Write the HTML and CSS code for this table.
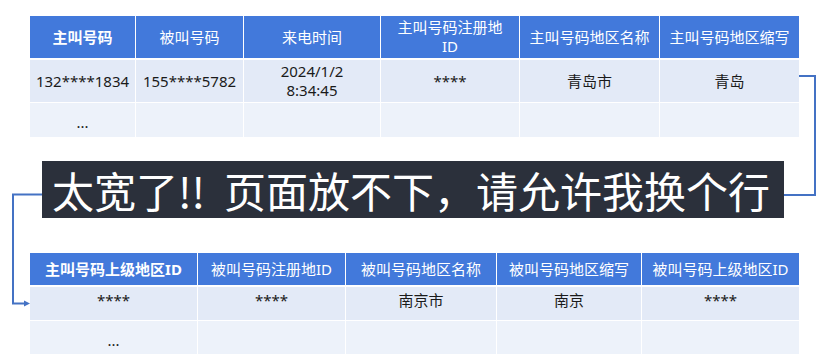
FILE: index.html
```html
<!DOCTYPE html>
<html lang="zh-CN">
<head>
<meta charset="utf-8">
<title>表格换行</title>
<link rel="stylesheet" href="styles.css">
</head>
<body>
<div class="page">
  <table class="grid grid-top">
    <colgroup>
      <col class="w106"><col class="w108"><col class="w137"><col class="w139"><col class="w140"><col class="w139">
    </colgroup>
    <thead>
      <tr>
        <th class="strong">主叫号码</th>
        <th>被叫号码</th>
        <th>来电时间</th>
        <th>主叫号码注册地<br>ID</th>
        <th>主叫号码地区名称</th>
        <th class="last">主叫号码地区缩写</th>
      </tr>
    </thead>
    <tbody>
      <tr class="row-a">
        <td>132****1834</td>
        <td>155****5782</td>
        <td>2024/1/2<br>8:34:45</td>
        <td>****</td>
        <td>青岛市</td>
        <td class="last">青岛</td>
      </tr>
      <tr class="row-b">
        <td>...</td>
        <td></td>
        <td></td>
        <td></td>
        <td></td>
        <td class="last"></td>
      </tr>
    </tbody>
  </table>

  <div class="banner">太宽了!!&nbsp; 页面放不下，请允许我换个行</div>

  <table class="grid grid-bottom">
    <colgroup>
      <col class="w168"><col class="w148"><col class="w151"><col class="w145"><col class="w157">
    </colgroup>
    <thead>
      <tr>
        <th class="strong">主叫号码上级地区ID</th>
        <th>被叫号码注册地ID</th>
        <th>被叫号码地区名称</th>
        <th>被叫号码地区缩写</th>
        <th class="last">被叫号码上级地区ID</th>
      </tr>
    </thead>
    <tbody>
      <tr class="row-c">
        <td>****</td>
        <td>****</td>
        <td>南京市</td>
        <td>南京</td>
        <td class="last">****</td>
      </tr>
      <tr class="row-d">
        <td>...</td>
        <td></td>
        <td></td>
        <td></td>
        <td class="last"></td>
      </tr>
    </tbody>
  </table>

  <svg class="connectors" width="829" height="361" viewBox="0 0 829 361" aria-hidden="true">
    <polyline points="799,76 815,76 815,195 784,195" fill="none" stroke="#4472c4" stroke-width="2"/>
    <polyline points="42,194.5 13,194.5 13,303.5 25,303.5" fill="none" stroke="#4472c4" stroke-width="2"/>
    <polygon points="24,300.5 30,303.5 24,306.5" fill="#4472c4"/>
  </svg>
</div>
</body>
</html>
```

FILE: styles.css
```css
html, body {
  margin: 0;
  padding: 0;
  background: #ffffff;
}

.page {
  position: relative;
  width: 829px;
  height: 361px;
  box-sizing: border-box;
  padding: 16px 30px 0 30px;
  font-family: "Noto Sans", "Noto Sans CJK SC", sans-serif;
  color: #1a1a1a;
}

.grid {
  border-collapse: separate;
  border-spacing: 0;
  table-layout: fixed;
  width: 769px;
  font-size: 15px;
  text-align: center;
}

.w106 { width: 106px; }
.w108 { width: 108px; }
.w137 { width: 137px; }
.w139 { width: 139px; }
.w140 { width: 140px; }
.w168 { width: 168px; }
.w148 { width: 148px; }
.w151 { width: 151px; }
.w145 { width: 145px; }
.w157 { width: 157px; }

.grid th,
.grid td {
  box-sizing: border-box;
  padding: 0 1px;
  border-right: 1px solid #ffffff;
  vertical-align: middle;
  white-space: nowrap;
}

.grid th.last,
.grid td.last {
  border-right: 0;
}

.grid th {
  background: #4279db;
  color: #ffffff;
  font-weight: 400;
  line-height: 19px;
  border-bottom: 2px solid #ffffff;
}

.grid th.strong {
  font-weight: 700;
}

.grid td {
  line-height: 19px;
}

.grid-top th { height: 44px; }
.grid-top .row-a td { height: 43px; background: #e3eaf7; border-bottom: 1px solid #ffffff; }
.grid-top .row-b td { height: 34px; background: #edf2fa; padding-top: 4px; }

.grid-bottom th { height: 34px; }
.grid-bottom .row-c td { height: 34px; background: #e3eaf7; border-bottom: 1px solid #ffffff; padding-bottom: 6px; }
.grid-bottom .row-d td { height: 33px; background: #edf2fa; padding-top: 6px; }

.banner {
  box-sizing: border-box;
  width: 742px;
  height: 57px;
  margin: 24px 0 35px 12px;
  padding: 0 0 0 10px;
  background: #2b303b;
  color: #ffffff;
  font-family: "Noto Sans CJK SC", "Noto Sans", sans-serif;
  font-size: 42px;
  line-height: 57px;
  white-space: nowrap;
}

.connectors {
  position: absolute;
  left: 0;
  top: 0;
  pointer-events: none;
}
```
